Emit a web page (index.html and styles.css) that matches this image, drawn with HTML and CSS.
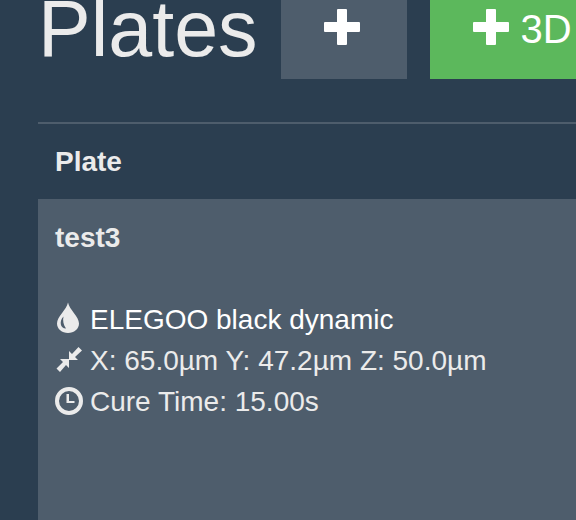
FILE: index.html
```html
<!DOCTYPE html>
<html lang="en">
<head>
    <meta charset="UTF-8">
    <meta name="viewport" content="width=device-width, initial-scale=1.0">
    <title>Plates</title>
    <link rel="stylesheet" href="styles.css">
</head>
<body>
    <main class="container">
        <header class="page-header">
            <h1>Plates</h1>
            <button type="button" class="btn" aria-label="Add plate">
                <svg class="plus" viewBox="0 0 36 36" aria-hidden="true">
                    <path d="M14 0h8q1 0 1 1v12h12q1 0 1 1v8q0 1-1 1H23v12q0 1-1 1h-8q-1 0-1-1V23H1q-1 0-1-1v-8q0-1 1-1h12V1q0-1 1-1z"/>
                </svg>
            </button>
            <button type="button" class="btn btn-success">
                <svg class="plus" viewBox="0 0 36 36" aria-hidden="true">
                    <path d="M14 0h8q1 0 1 1v12h12q1 0 1 1v8q0 1-1 1H23v12q0 1-1 1h-8q-1 0-1-1V23H1q-1 0-1-1v-8q0-1 1-1h12V1q0-1 1-1z"/>
                </svg>
                <span>3D</span>
            </button>
        </header>

        <table class="table">
            <thead>
                <tr><th scope="col">Plate</th></tr>
            </thead>
            <tbody>
                <tr>
                    <td>
                        <p class="plate-name">test3</p>
                        <ul class="details">
                            <li>
                                <svg class="icon" viewBox="0 0 28 32" aria-hidden="true">
                                    <path fill-rule="evenodd" d="M13 .5C11.500 8 2 14.500 2 21.500C2 27 7 31 13 31s11-4 11-9.500C24 14.500 14.500 8 13 .5zM8.500 14.500C7.500 18.500 8.500 23 11 26.500C5 26.500 4 19 8.500 14.500z"/>
                                </svg>
                                <a href="#">ELEGOO black dynamic</a>
                            </li>
                            <li>
                                <svg class="icon" viewBox="0 0 28 32" aria-hidden="true">
                                    <path d="M14 17V8l3 3 6.500-7 3.500 3.500-7 6.500 3 3zM14 16H5l3 3-6.500 6.500L5 29l6-7 3 3z"/>
                                </svg>
                                <span>X: 65.0µm Y: 47.2µm Z: 50.0µm</span>
                            </li>
                            <li>
                                <svg class="icon" viewBox="0 0 28 32" aria-hidden="true">
                                    <circle cx="14" cy="17" r="12" fill="none" stroke="currentColor" stroke-width="4"/>
                                    <path d="M11.500 10H14v7h5.500v2h-8z"/>
                                </svg>
                                <span>Cure Time: 15.00s</span>
                            </li>
                        </ul>
                    </td>
                </tr>
            </tbody>
        </table>
    </main>
</body>
</html>
```

FILE: styles.css
```css
body {
    margin: 0;
    background: #2b3e50;
    color: #ebebeb;
    font-family: "Liberation Sans", Arial, sans-serif;
    font-size: 28px;
    line-height: 41px;
    overflow: hidden;
}

.container {
    padding-left: 38px;
}

/* Header */
.page-header {
    display: flex;
    gap: 23px;
    margin-bottom: 43px;
}

h1 {
    margin: 0;
    font-size: 79px;
    font-weight: normal;
    line-height: 58px;
}

.btn {
    display: flex;
    flex-shrink: 0;
    align-items: center;
    gap: 12px;
    padding: 0 47px 21px 43px;
    border: 0;
    background: #4e5d6c;
    color: #fff;
    font-family: inherit;
    font-size: 40px;
    line-height: 58px;
    cursor: pointer;
}

.btn-success {
    background: #5cb85c;
}

.plus {
    width: 36px;
    height: 36px;
    margin-bottom: 4px;
    fill: currentColor;
}

/* Plate table */
.table {
    width: 100%;
    border-top: 2px solid #4e5d6c;
    border-collapse: separate;
    border-spacing: 0;
}

th,
td {
    padding: 17px;
    text-align: left;
}

td {
    height: calc(100vh - 234px);
    padding-top: 18px;
    background: #4e5d6c;
    vertical-align: top;
}

.plate-name {
    margin: 0 0 41px;
    font-weight: bold;
}

.details {
    margin: 0;
    padding: 0;
    list-style: none;
}

.details li {
    display: flex;
    align-items: flex-start;
    gap: 7px;
    white-space: nowrap;
}

.details a {
    color: #fff;
    text-decoration: none;
}

.icon {
    width: 28px;
    height: 32px;
    margin-top: 3px;
    fill: currentColor;
}
```
